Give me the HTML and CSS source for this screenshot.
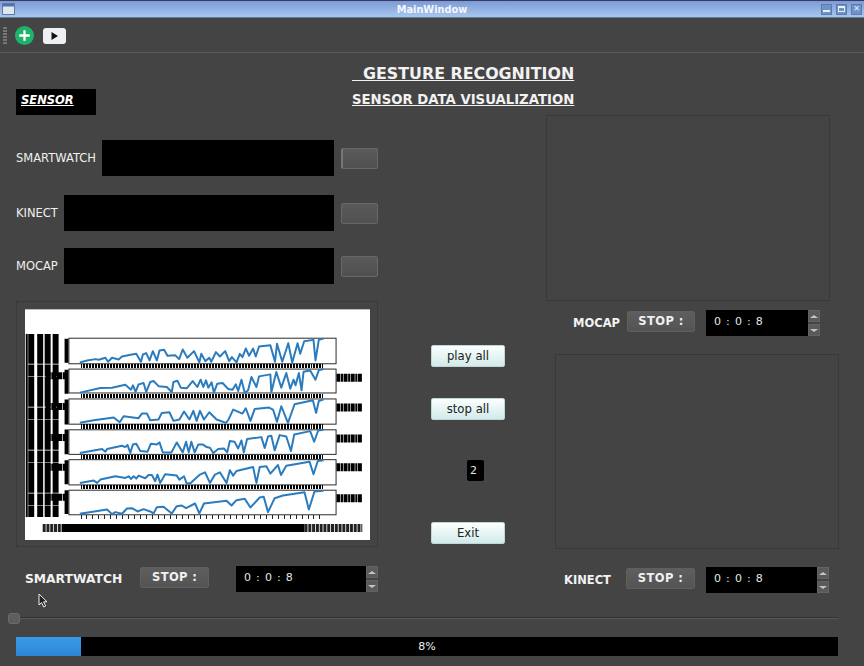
FILE: index.html
```html
<!DOCTYPE html>
<html lang="en">
<head>
    <meta charset="UTF-8">
    <title>MainWindow</title>
    <link rel="stylesheet" href="styles.css">
</head>
<body>

<div class="window">
    <div class="titlebar">
        <svg class="win-icon" width="13" height="12" viewBox="0 0 13 12">
            <rect x="0.5" y="0.5" width="12" height="11" fill="#dfe6ee" stroke="#5f7ba8"/>
            <rect x="1" y="1" width="11" height="2.5" fill="#4e72b0"/>
        </svg>
        <span class="win-title">MainWindow</span>
        <div class="win-buttons">
            <div class="win-btn"><span class="win-min"></span></div>
            <div class="win-btn"><span class="win-max"></span></div>
            <div class="win-btn win-close">&#10005;</div>
        </div>
    </div>

    <div class="toolbar">
        <div class="grip"></div>
        <svg class="tool-add" width="19" height="19" viewBox="0 0 20 20">
            <circle cx="10" cy="10" r="10" fill="#1fb26b"/>
            <path d="M10 4.5v11M4.5 10h11" stroke="#fff" stroke-width="2.4"/>
        </svg>
        <svg class="tool-play" width="23" height="16" viewBox="0 0 23 16">
            <rect width="23" height="16" rx="3" fill="#eef0f4"/>
            <path d="M8.5 4l6.5 4-6.5 4z" fill="#111"/>
        </svg>
    </div>

    <div class="head">
        <div class="sensor-box">SENSOR</div>
        <div class="heading">
            <h1>  GESTURE RECOGNITION</h1>
            <h2>SENSOR DATA VISUALIZATION</h2>
        </div>
    </div>

    <div class="columns">
        <div class="left">
            <div class="sensor-row">
                <label>SMARTWATCH</label>
                <div class="sensor-field"></div>
                <button class="led led-first"></button>
            </div>
            <div class="sensor-row">
                <label>KINECT</label>
                <div class="sensor-field"></div>
                <button class="led"></button>
            </div>
            <div class="sensor-row">
                <label>MOCAP</label>
                <div class="sensor-field"></div>
                <button class="led"></button>
            </div>

            <div class="plot-panel">
                <svg class="plot" width="345" height="231" viewBox="0 0 345 231">
                    <!-- y tick labels, all overlapping -->
                    <path class="ylabels-thin" d="M1 24V208"/>
                    <path class="ylabels" d="M5.5 24V208M14.5 24V208M22 24V208M30 24V208"/>
                    <path class="ylabels-wide" d="M20 66H40M20 97H40M20 128H40M20 158H40M20 188H40"/>
                    <path class="ybars" d="M41 29V53M41 60V84M41 90V115M41 120V145M41 151V175M41 181V205"/>
                    <path class="xlabels-right" d="M312 68H338M312 98H338M312 129H338M312 158H338M312 189H338"/>
                    <path class="xlabels" d="M36 219H280"/>
                    <path class="xlabels-ends" d="M17 219H36M280 219H338"/>

                    <g transform="translate(35 24) scale(.33333)">
                        <rect class="axes" x="25" y="13" width="805" height="77"/>
                        <rect class="axes" x="25" y="106" width="805" height="72"/>
                        <rect class="axes" x="25" y="196" width="805" height="76"/>
                        <path class="ticks" d="M60 97H790M60 187H790M60 279H790"/>
                        <polyline class="series" points="58,86 80,80 105,76 115,78 135,72 143,84 155,72 175,77 185,68 215,62 228,60 242,84 248,62 258,58 268,80 278,52 290,80 298,50 312,48 322,66 345,64 357,76 368,47 382,72 402,52 418,86 424,60 436,82 448,72 454,84 468,55 480,68 496,52 508,82 516,70 530,86 540,60 548,70 558,44 568,66 580,44 588,68 598,38 632,34 646,84 652,30 668,84 686,28 698,86 714,28 722,60 734,22 762,18 768,80 778,18 792,14"/>
                        <polyline class="series" points="58,177 120,163 155,162 195,153 212,168 218,155 226,175 235,152 250,148 258,175 270,145 280,142 296,158 320,160 335,175 340,145 352,141 362,162 380,164 398,142 412,160 422,138 430,160 438,140 445,162 455,146 462,177 472,150 488,148 505,166 518,168 528,152 535,172 545,138 555,178 565,170 575,130 590,160 598,128 632,122 635,176 650,115 665,162 680,118 692,165 702,138 708,155 718,118 726,170 732,114 752,110 768,138 778,110 792,106"/>
                        <polyline class="series" points="58,268 100,260 160,252 178,266 190,248 235,254 245,240 260,240 270,260 295,258 305,238 328,236 340,262 358,258 372,234 388,258 400,232 410,262 420,232 432,258 448,236 470,258 498,268 505,260 520,228 548,240 558,224 572,262 585,226 628,222 640,228 652,265 665,218 685,268 705,212 760,200 770,238 778,202 792,198"/>
                    </g>

                    <g transform="translate(35 117) scale(.33333)">
                        <rect class="axes" x="25" y="10" width="805" height="74"/>
                        <rect class="axes" x="25" y="100" width="805" height="76"/>
                        <rect class="axes" x="25" y="192" width="805" height="74"/>
                        <path class="ticks" d="M60 91H790M60 183H790"/>
                        <path class="ticks-last" d="M60 273H790"/>
                        <polyline class="series" points="58,80 125,68 135,76 140,68 185,58 195,62 202,56 210,80 218,54 228,52 240,74 262,76 272,52 290,54 298,48 308,78 334,78 350,48 368,78 378,46 386,78 394,46 404,78 415,54 428,54 440,62 450,64 460,80 475,68 492,66 502,78 510,44 524,46 535,66 545,42 552,78 562,38 605,32 615,65 625,30 635,28 645,72 660,26 680,30 694,74 704,24 752,14 764,46 776,12 792,10"/>
                        <polyline class="series" points="58,170 100,163 110,170 120,160 165,150 195,155 205,150 212,158 220,150 228,157 235,148 255,156 265,146 275,146 285,165 292,145 300,170 315,144 350,148 358,160 372,150 380,172 392,170 405,158 420,145 435,138 450,170 465,145 480,138 500,170 510,132 520,148 530,134 580,122 590,170 600,122 620,120 632,142 655,116 664,146 680,118 750,106 762,144 775,104 792,102"/>
                        <polyline class="series" points="58,263 140,250 155,264 165,258 185,263 200,247 215,246 232,256 250,249 270,256 280,262 290,243 310,242 335,262 350,240 365,238 378,246 405,232 418,262 432,232 500,224 515,238 530,222 555,218 572,244 600,214 612,212 625,258 645,216 670,208 735,198 748,250 765,196 792,194"/>
                    </g>
                </svg>
            </div>

            <div class="stop-row stop-smartwatch">
                <span class="stop-name">SMARTWATCH</span>
                <button class="stop-btn">STOP :</button>
                <div class="spin">
                    <div class="spin-value">0 : 0 : 8</div>
                    <div class="spin-arrows">
                        <span class="arrow-up"></span>
                        <span class="arrow-down"></span>
                    </div>
                </div>
            </div>
        </div>

        <div class="center">
            <button class="light-btn">play all</button>
            <button class="light-btn">stop all</button>
            <div class="counter">2</div>
            <button class="light-btn">Exit</button>
        </div>

        <div class="right">
            <div class="video video-mocap"></div>
            <div class="stop-row stop-mocap">
                <span class="stop-name">MOCAP</span>
                <button class="stop-btn">STOP :</button>
                <div class="spin">
                    <div class="spin-value">0 : 0 : 8</div>
                    <div class="spin-arrows">
                        <span class="arrow-up"></span>
                        <span class="arrow-down"></span>
                    </div>
                </div>
            </div>
            <div class="video video-kinect"></div>
            <div class="stop-row stop-kinect">
                <span class="stop-name">KINECT</span>
                <button class="stop-btn">STOP :</button>
                <div class="spin">
                    <div class="spin-value">0 : 0 : 8</div>
                    <div class="spin-arrows">
                        <span class="arrow-up"></span>
                        <span class="arrow-down"></span>
                    </div>
                </div>
            </div>
        </div>
    </div>

    <div class="slider">
        <div class="slider-handle"></div>
        <div class="slider-track"></div>
    </div>

    <div class="progress">
        <div class="progress-fill" style="width: 65px"></div>
        <span class="progress-text">8%</span>
    </div>

    <svg class="cursor" width="11" height="15" viewBox="0 0 11 15">
        <path d="M1 1v11l2.6-2.4L5.6 14l2-1-2-4.2H9z" fill="#222" stroke="#eee" stroke-width="1"/>
    </svg>
</div>

</body>
</html>
```

FILE: styles.css
```css
* {
    box-sizing: border-box;
}
body {
    margin: 0;
    background-color: #444444;
    font-family: "DejaVu Sans", sans-serif;
    font-size: 11.5px;
    color: #f0f0f0;
}
button {
    font-family: inherit;
    padding: 0;
}
.window {
    position: relative;
    width: 864px;
    height: 666px;
    overflow: hidden;
    background-color: #444444;
}

/* title bar */
.titlebar {
    display: flex;
    align-items: center;
    height: 18px;
    padding: 0 2px;
    background: linear-gradient(#7a9bd6, #a9c7ee);
    border-top: 1px solid #3d3a5c;
    border-bottom: 1px solid #5f7b9f;
}
.win-title {
    flex: 1;
    margin-left: 28px;
    text-align: center;
    font-size: 9.8px;
    font-weight: bold;
    color: #f4f7fb;
}
.win-buttons {
    display: flex;
    gap: 4px;
}
.win-btn {
    display: flex;
    align-items: center;
    justify-content: center;
    width: 11px;
    height: 11px;
    background-color: #6f93c6;
    border: 1px solid #5a7cb0;
    color: #e8eef6;
    font-size: 8px;
    line-height: 1;
}
.win-min {
    width: 7px;
    height: 2px;
    margin-top: 4px;
    background-color: #e8eef6;
}
.win-max {
    width: 7px;
    height: 6px;
    border: 1px solid #e8eef6;
    border-top-width: 2px;
}

/* toolbar */
.toolbar {
    display: flex;
    align-items: center;
    height: 35px;
    padding: 1px 0 0 3px;
    border-bottom: 1px solid #5c5c5c;
}
.grip {
    width: 4px;
    height: 17px;
    background: repeating-linear-gradient(#777 0 2px, #444 2px 3px);
}
.tool-add {
    margin-left: 8px;
}
.tool-play {
    margin-left: 9px;
}

/* heading */
.head {
    display: flex;
    height: 62px;
    padding-left: 16px;
}
.sensor-box {
    width: 80px;
    height: 26px;
    margin-top: 36px;
    padding: 4px 0 0 5px;
    background-color: #000;
    font-style: italic;
    font-weight: bold;
    text-decoration: underline;
    color: #fff;
}
.heading {
    margin-left: 256px;
    padding-top: 12px;
    color: #f2f2f2;
}
.heading h1, .heading h2 {
    margin: 0;
    font-weight: bold;
    text-decoration: underline;
    white-space: pre;
}
.heading h1 {
    font-size: 15.85px;
    line-height: 18px;
}
.heading h2 {
    margin-top: 9px;
    font-size: 13.25px;
    line-height: 16px;
}

/* main columns */
.columns {
    display: grid;
    grid-template-columns: 362px 168px 292px;
    height: 477px;
    padding-left: 16px;
}
.left {
    padding-top: 25px;
}
.sensor-row {
    display: flex;
    align-items: center;
    gap: 6px;
    height: 36px;
    margin-bottom: 17px;
}
.sensor-row:first-child {
    margin-bottom: 19px;
}
.sensor-field {
    flex: 1;
    height: 36px;
    background-color: #000;
}
.led {
    width: 37px;
    height: 21px;
    margin-left: 1px;
    background: linear-gradient(#5a5a5a, #505050);
    border: 1px solid #686868;
    border-radius: 2px;
}
.led-first {
    border-left: 2px solid #777;
}
.plot-panel {
    width: 362px;
    height: 246px;
    padding: 7px 7px 6px 8px;
    border: 1px solid #3a3a3a;
}
.plot {
    display: block;
    background-color: #fff;
    border-top: 1px solid #bbb;
    filter: blur(.35px);
}

/* plot marks */
.axes {
    fill: #fff;
    stroke: #2a2a2a;
    stroke-width: 3;
}
.ticks {
    fill: none;
    stroke: #000;
    stroke-width: 13;
    stroke-dasharray: 6 3;
    shape-rendering: crispEdges;
}
.ticks-last {
    fill: none;
    stroke: #222;
    stroke-width: 12;
    stroke-dasharray: 3 15;
    shape-rendering: crispEdges;
}
.series {
    fill: none;
    stroke: #2b7cbf;
    stroke-width: 6;
    stroke-linejoin: round;
}
.ylabels {
    fill: none;
    stroke: #000;
    stroke-width: 6;
    stroke-dasharray: 30 .7 12 .5;
}
.ylabels-thin {
    fill: none;
    stroke: #000;
    stroke-width: 2;
}
.ylabels-wide {
    fill: none;
    stroke: #000;
    stroke-width: 7;
    stroke-dasharray: 5 .7;
}
.ybars {
    fill: none;
    stroke: #000;
    stroke-width: 4;
}
.xlabels-right {
    fill: none;
    stroke: #000;
    stroke-width: 8;
    stroke-dasharray: 4 .6 2 .6;
}
.xlabels {
    fill: none;
    stroke: #000;
    stroke-width: 8;
}
.xlabels-ends {
    fill: none;
    stroke: #222;
    stroke-width: 8;
    stroke-dasharray: 3 .8;
}

/* stop rows */
.stop-row {
    display: flex;
    align-items: flex-start;
    height: 26px;
}
.stop-smartwatch {
    margin-top: 19px;
    padding-left: 9px;
}
.stop-mocap {
    margin-top: 9px;
    padding-left: 27px;
}
.stop-kinect {
    margin-top: 18px;
    padding-left: 18px;
}
.stop-name {
    margin-top: 6px;
    font-weight: bold;
    color: #f2f2f2;
}
.stop-smartwatch .stop-name {
    width: 116px;
    font-size: 12.3px;
}
.stop-mocap .stop-name {
    width: 54px;
}
.stop-kinect .stop-name {
    width: 62px;
}
.stop-btn {
    height: 21px;
    margin-top: 1px;
    padding-bottom: 2px;
    background: linear-gradient(#5e5e5e, #545454);
    border: 1px solid #5f5f5f;
    border-radius: 2px;
    color: #f0f0f0;
    font-size: 11.5px;
    font-weight: bold;
    letter-spacing: .4px;
}
.stop-smartwatch .stop-btn {
    width: 69px;
}
.stop-mocap .stop-btn {
    width: 68px;
}
.stop-kinect .stop-btn {
    width: 69px;
}
.spin {
    display: flex;
}
.stop-smartwatch .spin {
    margin-left: 27px;
}
.stop-mocap .spin, .stop-kinect .spin {
    margin-left: 11px;
}
.spin-value {
    height: 26px;
    padding: 5px 0 0 8px;
    background-color: #000;
    font-size: 11px;
    letter-spacing: .8px;
    white-space: pre;
    color: #e6e6e6;
}
.stop-smartwatch .spin-value {
    width: 130px;
}
.stop-mocap .spin-value {
    width: 102px;
}
.stop-kinect .spin-value {
    width: 111px;
}
.spin-arrows {
    display: flex;
    flex-direction: column;
    gap: 2px;
    width: 12px;
}
.arrow-up, .arrow-down {
    display: flex;
    align-items: center;
    justify-content: center;
    height: 12px;
    background-color: #5a5a5a;
    border: 1px solid #636363;
}
.arrow-up::after, .arrow-down::after {
    content: "";
    border-left: 4px solid transparent;
    border-right: 4px solid transparent;
}
.arrow-up::after {
    border-bottom: 3px solid #c4c4c4;
}
.arrow-down::after {
    border-top: 3px solid #c4c4c4;
}

/* center buttons */
.center {
    display: flex;
    flex-direction: column;
    padding: 230px 0 0 53px;
}
.light-btn {
    width: 74px;
    height: 22px;
    flex: none;
    margin-bottom: 31px;
    background: linear-gradient(#fbffff, #d3eaea);
    border: 1px solid #c2d6d6;
    border-radius: 2px;
    color: #222;
    font-size: 11.7px;
}
.counter {
    width: 17px;
    height: 21px;
    margin: 9px 0 41px 36px;
    padding: 4px 0 0 3px;
    background-color: #000;
    border-radius: 2px;
    font-size: 11px;
    color: #e6e6e6;
}

/* video panels */
.video {
    border: 1px solid #393939;
}
.video-mocap {
    width: 284px;
    height: 186px;
}
.video-kinect {
    width: 284px;
    height: 195px;
    margin: 18px 0 0 9px;
}

/* bottom */
.slider {
    display: flex;
    align-items: center;
    height: 12px;
    margin: 20px 26px 0 8px;
}
.slider-handle {
    width: 12px;
    height: 11px;
    background-color: #5d5d5d;
    border: 1px solid #6a6a6a;
    border-radius: 3px;
}
.slider-track {
    flex: 1;
    height: 2px;
    background-color: #333;
    border-bottom: 1px solid #595959;
}
.progress {
    position: relative;
    height: 19px;
    margin: 13px 26px 0 16px;
    background-color: #000;
    text-align: center;
    font-size: 11px;
    line-height: 19px;
    color: #f0f0f0;
}
.progress-fill {
    position: absolute;
    left: 0;
    top: 0;
    bottom: 0;
    background: linear-gradient(#3a9be8, #2b86d4);
}
.progress-text {
    position: relative;
}

/* mouse pointer over the window */
.cursor {
    position: absolute;
    left: 38px;
    top: 593px;
}
```
